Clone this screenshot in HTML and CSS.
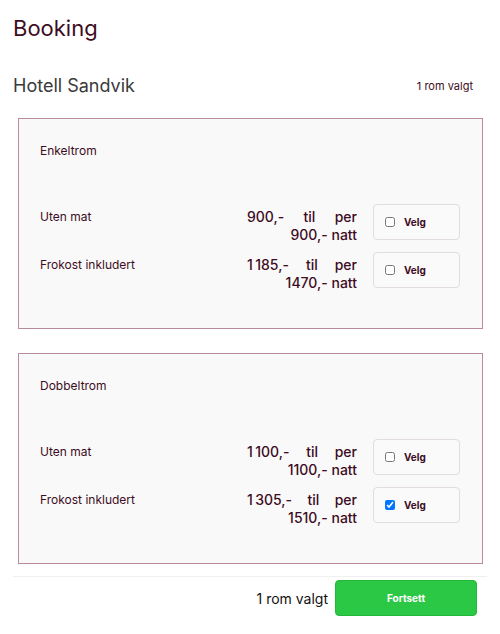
FILE: index.html
```html
<!DOCTYPE html>
<html lang="no">
<head>
<meta charset="UTF-8">
<title>Booking</title>
<link rel="stylesheet" href="styles.css">
</head>
<body>

<div class="page">
<h1>Booking</h1>

<div class="hotel-head">
  <h2>Hotell Sandvik</h2>
  <span class="count">1 rom valgt</span>
</div>

<div class="room-card">
  <div class="room-title">Enkeltrom</div>
  <div class="rate-list">
    <div class="rate">
      <div class="rate-name">Uten mat</div>
      <div class="rate-price">900,- til per 900,- natt</div>
      <label class="pick"><input type="checkbox"> Velg</label>
    </div>
    <div class="rate">
      <div class="rate-name">Frokost inkludert</div>
      <div class="rate-price">1&#8201;185,- til per 1470,- natt</div>
      <label class="pick"><input type="checkbox"> Velg</label>
    </div>
  </div>
</div>

<div class="room-card">
  <div class="room-title">Dobbeltrom</div>
  <div class="rate-list">
    <div class="rate">
      <div class="rate-name">Uten mat</div>
      <div class="rate-price">1&#8201;100,- til per 1100,- natt</div>
      <label class="pick"><input type="checkbox"> Velg</label>
    </div>
    <div class="rate">
      <div class="rate-name">Frokost inkludert</div>
      <div class="rate-price">1&#8201;305,- til per 1510,- natt</div>
      <label class="pick"><input type="checkbox" checked> Velg</label>
    </div>
  </div>
</div>

<div class="footer">
  <span class="footer-count">1 rom valgt</span>
  <button type="button" class="next">Fortsett</button>
</div>
</div>

</body>
</html>
```

FILE: styles.css
```css
body {
    margin: 0;
    font-family: Inter, "Noto Sans", sans-serif;
    color: #3d0c22;
    background: #fff;
}
.page {
    padding: 0 13px;
}
h1 {
    font-size: 22px;
    font-weight: 400;
    margin: 14px 0 0;
    line-height: 28px;
}
.hotel-head {
    display: flex;
    justify-content: space-between;
    align-items: center;
    margin-top: 32px;
    padding-right: 14px;
}
.hotel-head h2 {
    font-size: 18px;
    font-weight: 400;
    color: #3a3a3a;
    margin: 0;
    line-height: 24px;
}
.count {
    font-size: 11px;
}
.room-card {
    margin: 20px 4px 0 5px;
    border: 1px solid #b98aa0;
    background: #f9f9f9;
    padding: 24px 22px 40px 21px;
}
.room-card + .room-card {
    margin-top: 24px;
}
.room-title {
    font-size: 12px;
    line-height: 16px;
}
.rate-list {
    margin-top: 45px;
    display: flex;
    flex-direction: column;
    gap: 12px;
}
.rate {
    display: flex;
    align-items: flex-start;
    height: 36px;
}
.rate-name {
    flex: 1;
    font-size: 12px;
    line-height: 18px;
    padding-top: 4px;
}
.rate-price {
    width: 110px;
    font-size: 14px;
    font-weight: 500;
    line-height: 18px;
    padding-top: 4px;
    text-align: justify;
    text-align-last: right;
    margin-right: 16px;
}
.pick {
    display: flex;
    align-items: center;
    width: 87px;
    height: 36px;
    box-sizing: border-box;
    border: 1px solid #e2dcdf;
    border-radius: 4px;
    background: #fafafa;
    padding-left: 11px;
    font-size: 10px;
    font-weight: 700;
    gap: 9px;
}
.pick input {
    width: 10px;
    height: 10px;
    margin: 0;
}
.footer {
    margin-top: 12px;
    border-top: 1px solid #f0f0f0;
    display: flex;
    justify-content: flex-end;
    align-items: center;
    gap: 7px;
    padding: 3px 10px 0 0;
}
.footer-count {
    font-size: 14px;
    color: #111;
}
.next {
    width: 142px;
    height: 36px;
    border: 1px solid #22b83a;
    border-radius: 4px;
    background: #2bc845;
    color: #fff;
    font-family: inherit;
    font-size: 10px;
    font-weight: 700;
}
```
